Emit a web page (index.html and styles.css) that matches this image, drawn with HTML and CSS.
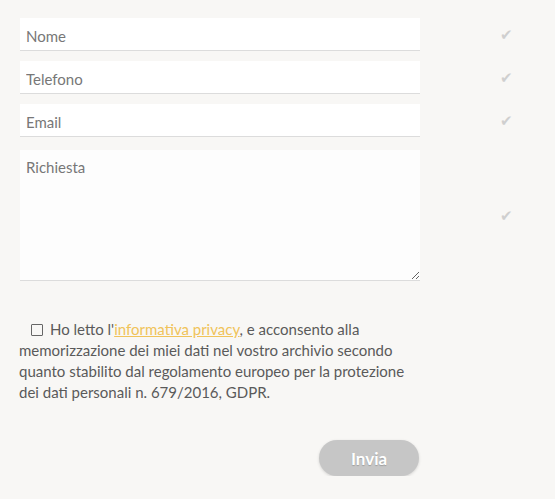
FILE: index.html
```html
<!DOCTYPE html>
<html lang="it">
  <head>
    <meta charset="UTF-8" />
    <meta name="viewport" content="width=device-width, initial-scale=1.0" />
    <title>Contatti</title>
    <link rel="stylesheet" href="styles.css">
  </head>
  <body>
    <form class="contact">
      <div class="row">
        <input class="field" type="text" placeholder="Nome" />
        <span class="check">&#10004;</span>
      </div>
      <div class="row">
        <input class="field" type="text" placeholder="Telefono" />
        <span class="check">&#10004;</span>
      </div>
      <div class="row">
        <input class="field" type="text" placeholder="Email" />
        <span class="check">&#10004;</span>
      </div>
      <div class="row row-area">
        <textarea class="field area" placeholder="Richiesta"></textarea>
        <span class="check">&#10004;</span>
      </div>

      <p class="privacy"><span class="box"></span>Ho letto l'<a href="#">informativa privacy</a>, e acconsento alla memorizzazione dei miei dati nel vostro archivio secondo quanto stabilito dal regolamento europeo per la protezione dei dati personali n. 679/2016, GDPR.</p>

      <div class="actions">
        <button type="button" class="send">Invia</button>
      </div>
    </form>
  </body>
</html>
```

FILE: styles.css
```css
body {
  margin: 0;
  background-color: #f8f7f5;
  font-family: Lato, "Open Sans", sans-serif;
  color: #555;
}
.contact {
  padding: 18px 0 0 20px;
}
.row {
  display: flex;
  align-items: center;
  margin-bottom: 10px;
}
.row-area {
  margin-top: 13px;
}
.field {
  width: 400px;
  height: 33px;
  box-sizing: border-box;
  border: none;
  border-bottom: 1px solid #dcdcdc;
  background: #fff;
  padding: 3px 6px 0;
  font-family: inherit;
  font-size: 15px;
  color: #555;
  outline: none;
}
.field::placeholder {
  color: #777;
}
.area {
  height: 131px;
  padding-top: 8px;
  resize: vertical;
  background: #fdfdfd;
}
.check {
  margin-left: 80px;
  font-size: 15px;
  color: #cfcfcf;
}
.privacy {
  width: 400px;
  margin: 38px 0 0 -1px;
  font-size: 15px;
  line-height: 21px;
  color: #5a5a5a;
}
.privacy a {
  color: #f0c35a;
}
.box {
  display: inline-block;
  width: 10px;
  height: 10px;
  margin: 0 7px 0 12px;
  border: 1.5px solid #666;
  border-radius: 1px;
  vertical-align: -1px;
}
.actions {
  width: 400px;
  display: flex;
  justify-content: flex-end;
  margin-top: 37px;
}
.send {
  width: 100px;
  height: 36px;
  margin-right: 1px;
  border: none;
  border-radius: 18px;
  background: #c6c6c6;
  color: #fff;
  font-family: inherit;
  font-weight: bold;
  font-size: 17px;
  text-shadow: 0 1px 1px rgba(0, 0, 0, 0.2);
  box-shadow: 0 1px 3px rgba(0, 0, 0, 0.15);
  cursor: pointer;
}
```
